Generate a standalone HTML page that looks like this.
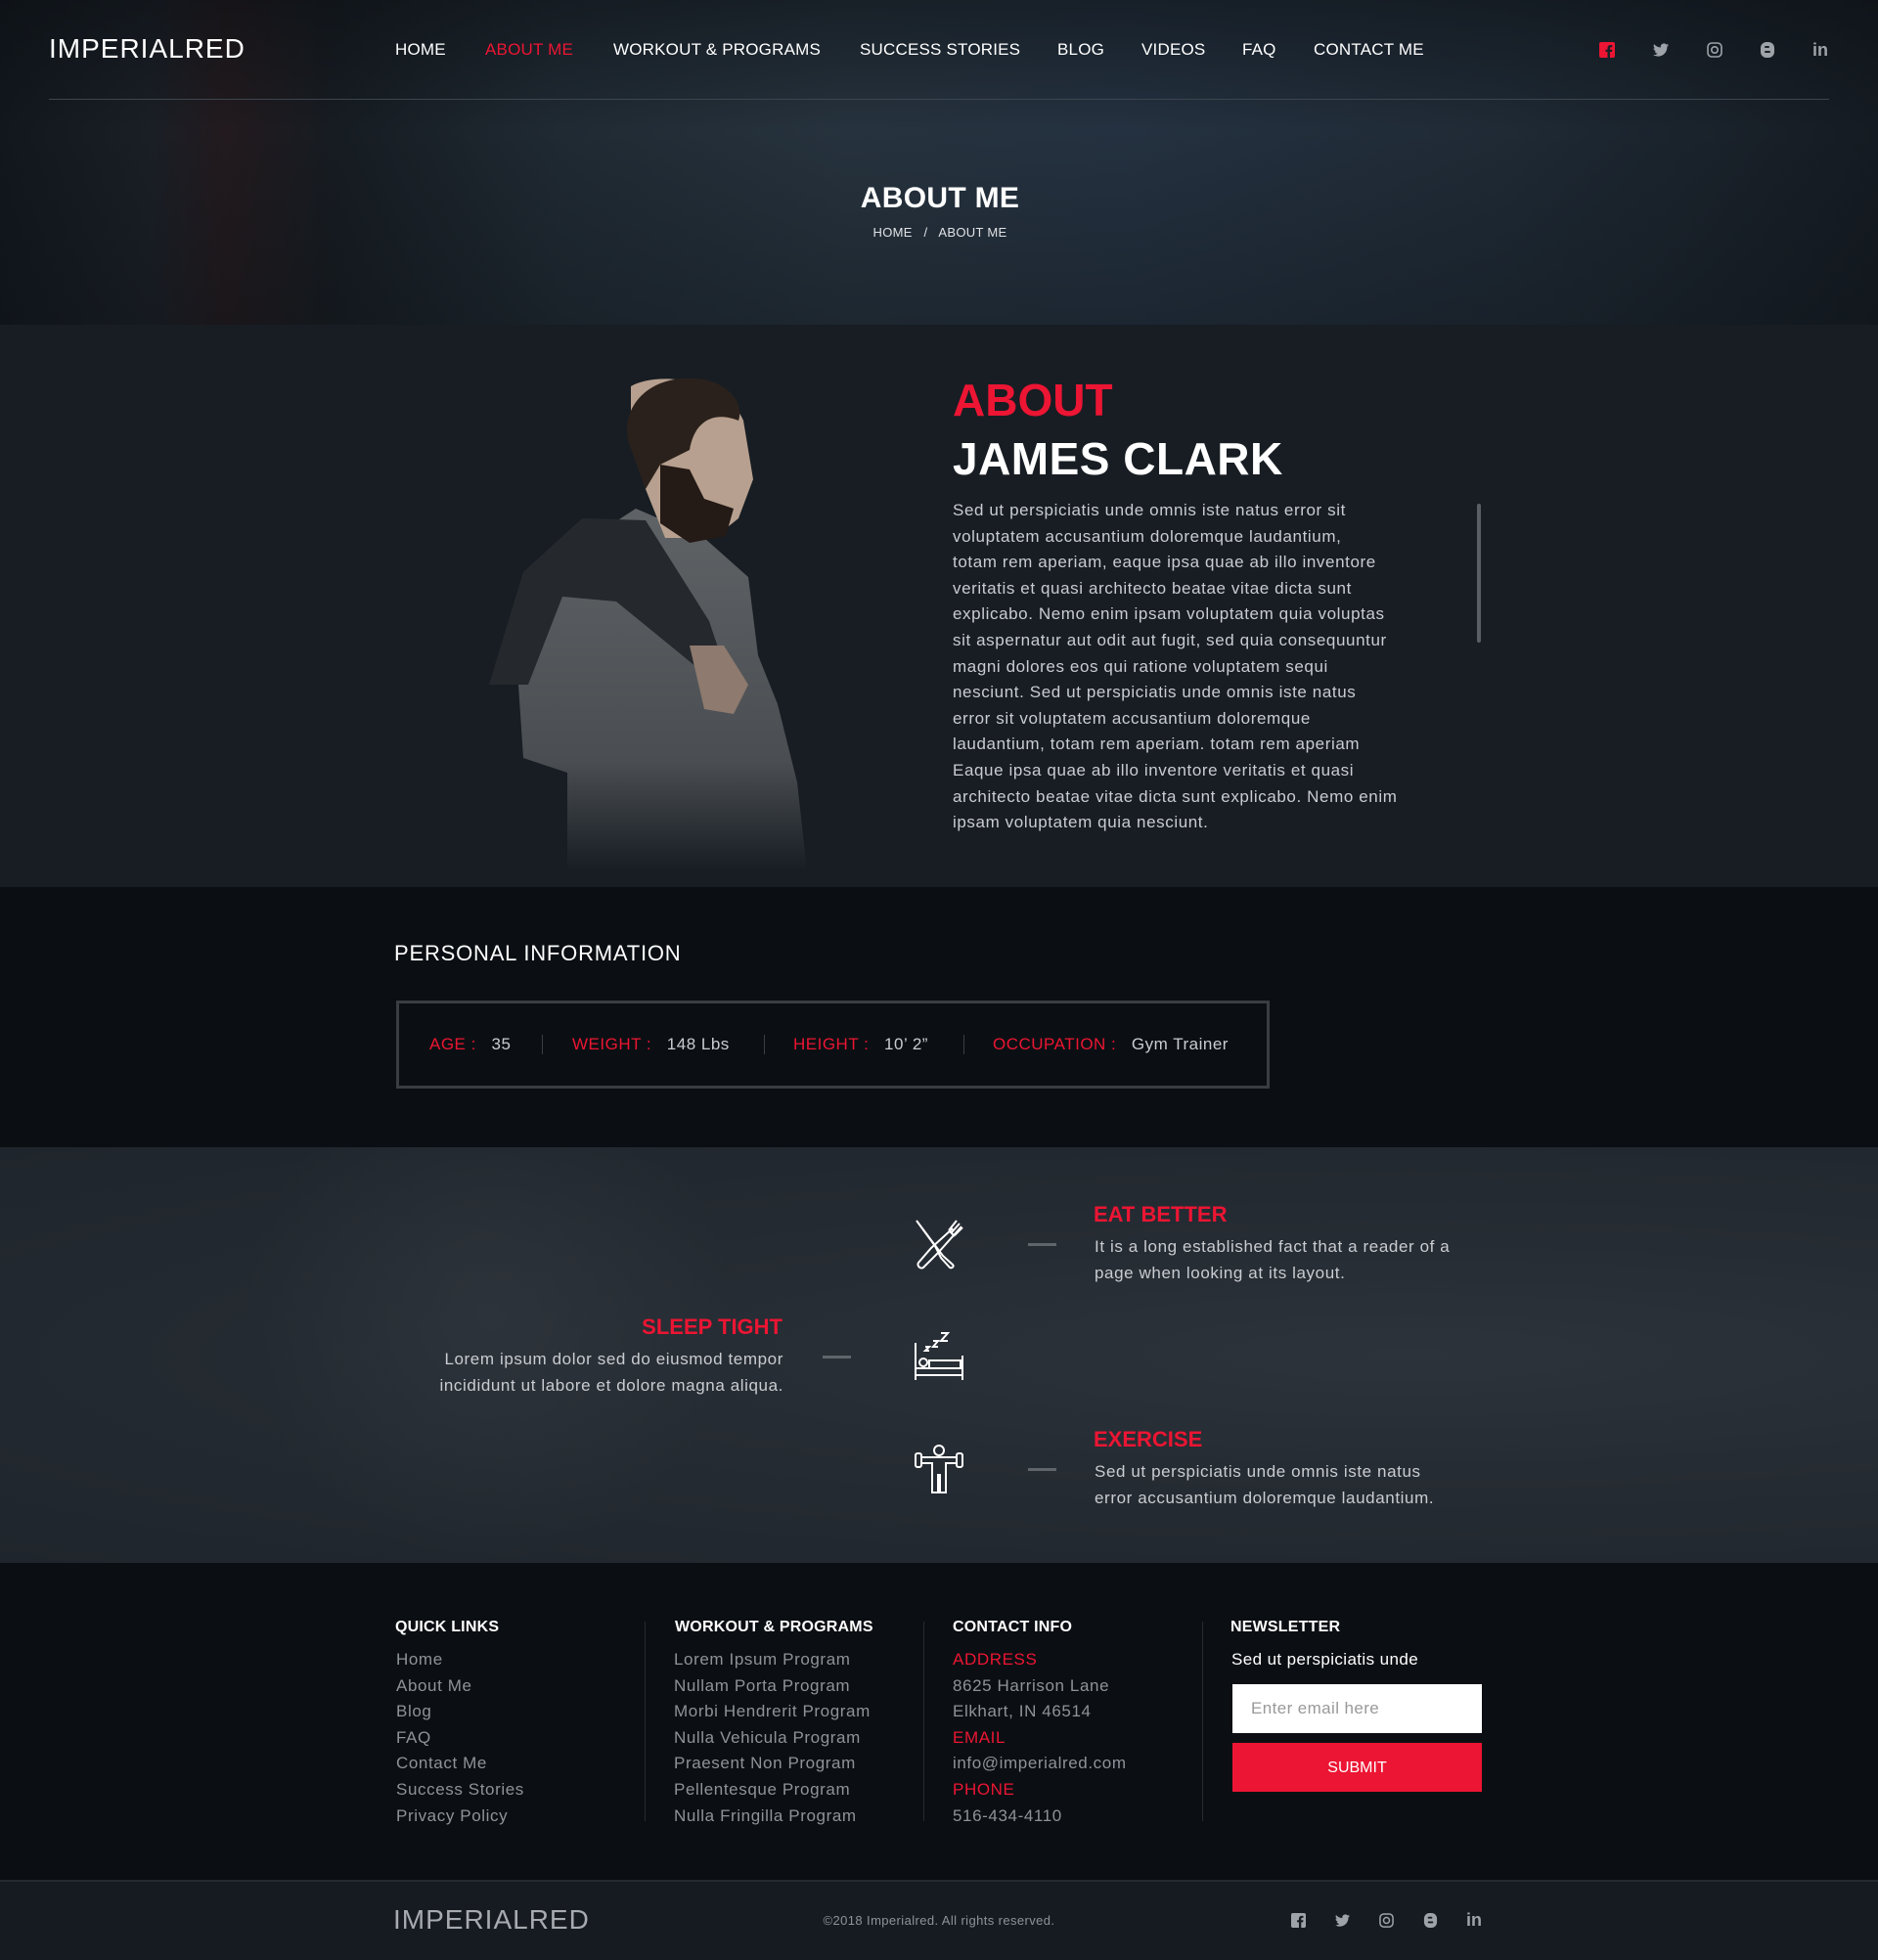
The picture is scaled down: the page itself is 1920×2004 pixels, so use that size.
<!DOCTYPE html>
<html><head><meta charset="utf-8"><style>
*{margin:0;padding:0;box-sizing:border-box}
body{width:1920px;height:2004px;background:#0b0f13;font-family:"Liberation Sans",Arial,sans-serif;position:relative;overflow:hidden;color:#fff}
.a{position:absolute;white-space:nowrap}
.nav{font-size:17px;top:41px;color:#fff;letter-spacing:.2px}
.red{color:#ec1533}
.p{font-size:17px;line-height:26.6px;color:#c9ccd1;letter-spacing:.6px}
.fh{font-size:16px;font-weight:bold;top:1655px;letter-spacing:.2px}
.fl{font-size:17px;line-height:26.6px;color:#8e9399;top:1684px;letter-spacing:.6px}
.ic{position:absolute;width:16px;height:16px}
.pi{font-size:17px;color:#c9ccd1;letter-spacing:.5px;top:1058px}
</style></head><body>
<!-- header -->
<div class="a" style="left:0;top:0;width:1920px;height:332px;background:linear-gradient(90deg,#11171d 0%,#1a1f26 8%,#221a1e 12%,#161c22 18%,#202a33 30%,#26323d 45%,#243140 60%,#1f2a35 80%,#151b22 100%)"></div>
<div class="a" style="left:0;top:0;width:1920px;height:332px;background:linear-gradient(180deg,rgba(10,14,18,.5),rgba(10,14,18,0) 40%,rgba(10,14,18,.3))"></div>
<div class="a" style="left:50px;top:34px;font-size:28px;letter-spacing:1px">IMPERIALRED</div>
<div class="a nav" style="left:404px">HOME</div>
<div class="a nav red" style="left:496px">ABOUT ME</div>
<div class="a nav" style="left:627px">WORKOUT &amp; PROGRAMS</div>
<div class="a nav" style="left:879px">SUCCESS STORIES</div>
<div class="a nav" style="left:1081px">BLOG</div>
<div class="a nav" style="left:1167px">VIDEOS</div>
<div class="a nav" style="left:1270px">FAQ</div>
<div class="a nav" style="left:1343px">CONTACT ME</div>
<svg class="ic" style="left:1635px;top:43px" viewBox="0 0 16 16"><rect width="16" height="16" rx="2" fill="#ec1533"/><path d="M11 16V10h2l.3-2.3H11V6.3c0-.7.2-1.1 1.1-1.1h1.2V3.1c-.2 0-1-.1-1.8-.1-1.8 0-3 1.1-3 3.100V7.7H6.5V10h2v6z" fill="#1a2028"/></svg>
<svg class="ic" style="left:1690px;top:43px" viewBox="0 0 16 16"><path d="M16 3a6.6 6.6 0 01-1.9.5A3.300 3.300 0 0015.600 1.700a6.600 6.600 0 01-2.100.8A3.300 3.300 0 007.900 5.500 9.300 9.300 0 011.100 2.100a3.300 3.300 0 001 4.400 3.300 3.300 0 01-1.500-.4 3.300 3.300 0 002.600 3.200 3.300 3.300 0 01-1.500.1 3.300 3.300 0 003.100 2.300A6.600 6.600 0 010 13.100 9.300 9.300 0 005 14.600c6 0 9.400-5 9.400-9.400v-.4A6.700 6.700 0 0016 3z" fill="#9ea3a9"/></svg>
<svg class="ic" style="left:1745px;top:43px" viewBox="0 0 16 16"><rect x="1" y="1" width="14" height="14" rx="4" fill="none" stroke="#9ea3a9" stroke-width="1.6"/><circle cx="8" cy="8" r="3.200" fill="none" stroke="#9ea3a9" stroke-width="1.600"/></svg>
<svg class="ic" style="left:1799px;top:43px" viewBox="0 0 16 16"><rect x="1" y="0" width="14" height="16" rx="6" fill="#9ea3a9"/><rect x="5" y="4" width="5" height="2" rx="1" fill="#1a2028"/><rect x="5" y="9" width="6" height="2" rx="1" fill="#1a2028"/></svg>
<div class="a" style="left:1853px;top:41px;font-size:18px;font-weight:bold;color:#9ea3a9">in</div>
<div class="a" style="left:50px;top:101px;width:1820px;height:1px;background:#3d454e"></div>
<div class="a" style="left:0;top:186px;width:1922px;text-align:center;font-size:30px;font-weight:bold;letter-spacing:.3px">ABOUT ME</div>
<div class="a" style="left:0;top:230px;width:1922px;text-align:center;font-size:13px;color:#e0e2e5;letter-spacing:.3px">HOME &nbsp; / &nbsp; ABOUT ME</div>

<!-- about -->
<div class="a" style="left:0;top:332px;width:1920px;height:575px;background:#171d23"></div>
<svg class="a" style="left:480px;top:370px" width="380" height="530" viewBox="0 0 380 530">
<defs><linearGradient id="sh" x1="0" y1="0" x2="0" y2="1"><stop offset="0" stop-color="#5f6366"/><stop offset=".7" stop-color="#4a4e52"/><stop offset="1" stop-color="#171d23"/></linearGradient></defs>
<path d="M170,150 L240,180 L285,220 L295,300 L315,350 L335,430 L345,520 L100,520 L100,420 L55,405 L48,300 L70,215 Z" fill="url(#sh)"/>
<path d="M20,330 L55,215 L115,160 L180,162 L245,265 L255,295 L232,312 L150,245 L95,240 L60,330 Z" fill="#25292e"/>
<path d="M165,25 C190,10 260,15 280,60 L290,120 L275,160 L250,180 L200,180 L180,130 L165,80 Z" fill="#b7a08f"/>
<path d="M162,80 C155,40 190,10 240,18 C270,25 280,45 275,60 C250,50 230,60 225,90 L195,105 L180,130 Z" fill="#2b211c"/>
<path d="M195,105 L225,110 L240,140 L270,150 L262,178 L225,185 L195,165 Z" fill="#241a16"/>
<path d="M225,290 L260,290 L285,330 L270,360 L240,355 Z" fill="#8e7a6e"/>
</svg>
<div class="a red" style="left:974px;top:382px;font-size:46px;font-weight:bold">ABOUT</div>
<div class="a" style="left:974px;top:442px;font-size:46px;font-weight:bold;letter-spacing:.5px">JAMES CLARK</div>
<div class="a p" style="left:974px;top:509px">Sed ut perspiciatis unde omnis iste natus error sit<br>voluptatem accusantium doloremque laudantium,<br>totam rem aperiam, eaque ipsa quae ab illo inventore<br>veritatis et quasi architecto beatae vitae dicta sunt<br>explicabo. Nemo enim ipsam voluptatem quia voluptas<br>sit aspernatur aut odit aut fugit, sed quia consequuntur<br>magni dolores eos qui ratione voluptatem sequi<br>nesciunt. Sed ut perspiciatis unde omnis iste natus<br>error sit voluptatem accusantium doloremque<br>laudantium, totam rem aperiam. totam rem aperiam<br>Eaque ipsa quae ab illo inventore veritatis et quasi<br>architecto beatae vitae dicta sunt explicabo. Nemo enim<br>ipsam voluptatem quia nesciunt.</div>
<div class="a" style="left:1510px;top:515px;width:4px;height:142px;border-radius:2px;background:#5a5f65"></div>

<!-- personal info -->
<div class="a" style="left:403px;top:962px;font-size:22px;letter-spacing:.8px">PERSONAL INFORMATION</div>
<div class="a" style="left:405px;top:1023px;width:893px;height:90px;border:3px solid #3a3d42"></div>
<div class="a pi" style="left:439px"><span class="red">AGE :</span>&nbsp;&nbsp; 35</div>
<div class="a" style="left:554px;top:1058px;width:1px;height:20px;background:#3a3f46"></div>
<div class="a pi" style="left:585px"><span class="red">WEIGHT :</span>&nbsp;&nbsp; 148 Lbs</div>
<div class="a" style="left:781px;top:1058px;width:1px;height:20px;background:#3a3f46"></div>
<div class="a pi" style="left:811px"><span class="red">HEIGHT :</span>&nbsp;&nbsp; 10’ 2”</div>
<div class="a" style="left:985px;top:1058px;width:1px;height:20px;background:#3a3f46"></div>
<div class="a pi" style="left:1015px"><span class="red">OCCUPATION :</span>&nbsp;&nbsp; Gym Trainer</div>

<!-- features -->
<div class="a" style="left:0;top:1173px;width:1920px;height:425px;background:radial-gradient(ellipse at 75% 50%,#2c333b 0%,#262c33 40%,#1f252c 100%)"></div>
<div class="a" style="left:250px;top:1173px;width:500px;height:425px;background:radial-gradient(ellipse at 50% 40%,rgba(60,66,74,.35),rgba(0,0,0,0) 70%)"></div>
<svg class="a" style="left:934px;top:1246px" width="52" height="52" viewBox="0 0 52 52" fill="none" stroke="#fff" stroke-width="2"><path d="M3,2 L30,38 L40,47 C42,49 39,51 37,50 L28,40 L22,28 Z"/><path d="M49,8 L25,35 L10,50 C7,52 3,48 5,45 L18,30 L40,10 M44,2 L36,12 M47,5 L39,14 M50,9 L42,17 M36,12 L42,18"/></svg>
<svg class="a" style="left:934px;top:1361px" width="52" height="52" viewBox="0 0 52 52" fill="none" stroke="#fff" stroke-width="2"><path d="M2,12 V50 M50,25 V50 M2,45 H50 M2,38 H50 M16,30 H48 V38 H16 Z"/><circle cx="10" cy="32" r="4"/><path d="M12,16 H16 L12,20 H16 M20,10 H25 L20,16 H25 M28,2 H35 L28,10 H35"/></svg>
<svg class="a" style="left:934px;top:1476px" width="52" height="52" viewBox="0 0 52 52" fill="none" stroke="#fff" stroke-width="2"><circle cx="26" cy="7" r="5"/><path d="M8,14 H44 M8,20 H19 V50 H25 V32 H27 V50 H33 V20 H44 M8,14 V20 M44,14 V20"/><rect x="2" y="10" width="6" height="14" rx="2"/><rect x="44" y="10" width="6" height="14" rx="2"/></svg>
<div class="a" style="left:1051px;top:1271px;width:29px;height:3px;background:#5f656b"></div>
<div class="a" style="left:841px;top:1386px;width:29px;height:3px;background:#5f656b"></div>
<div class="a" style="left:1051px;top:1501px;width:29px;height:3px;background:#5f656b"></div>
<div class="a red" style="left:1118px;top:1229px;font-size:22px;font-weight:bold">EAT BETTER</div>
<div class="a p" style="left:1119px;top:1262px">It is a long established fact that a reader of a<br>page when looking at its layout.</div>
<div class="a red" style="left:500px;top:1344px;width:300px;text-align:right;font-size:22px;font-weight:bold">SLEEP TIGHT</div>
<div class="a p" style="left:380px;top:1377px;width:421px;text-align:right">Lorem ipsum dolor sed do eiusmod tempor<br>incididunt ut labore et dolore magna aliqua.</div>
<div class="a red" style="left:1118px;top:1459px;font-size:22px;font-weight:bold">EXERCISE</div>
<div class="a p" style="left:1119px;top:1492px">Sed ut perspiciatis unde omnis iste natus<br>error accusantium doloremque laudantium.</div>

<!-- footer -->
<div class="a fh" style="left:404px">QUICK LINKS</div>
<div class="a fh" style="left:690px">WORKOUT &amp; PROGRAMS</div>
<div class="a fh" style="left:974px">CONTACT INFO</div>
<div class="a fh" style="left:1258px">NEWSLETTER</div>
<div class="a" style="left:659px;top:1658px;width:1px;height:204px;background:#262b31"></div>
<div class="a" style="left:944px;top:1658px;width:1px;height:204px;background:#262b31"></div>
<div class="a" style="left:1229px;top:1658px;width:1px;height:204px;background:#262b31"></div>
<div class="a fl" style="left:405px">Home<br>About Me<br>Blog<br>FAQ<br>Contact Me<br>Success Stories<br>Privacy Policy</div>
<div class="a fl" style="left:689px">Lorem Ipsum Program<br>Nullam Porta Program<br>Morbi Hendrerit Program<br>Nulla Vehicula Program<br>Praesent Non Program<br>Pellentesque Program<br>Nulla Fringilla Program</div>
<div class="a fl" style="left:974px"><span class="red">ADDRESS</span><br>8625 Harrison Lane<br>Elkhart, IN 46514<br><span class="red">EMAIL</span><br>info@imperialred.com<br><span class="red">PHONE</span><br>516-434-4110</div>
<div class="a" style="left:1259px;top:1684px;font-size:17px;line-height:26.6px;color:#fff;letter-spacing:.4px">Sed ut perspiciatis unde</div>
<div class="a" style="left:1260px;top:1722px;width:255px;height:50px;background:#fff;color:#999;font-size:17px;padding:15px 19px;letter-spacing:.4px">Enter email here</div>
<div class="a" style="left:1260px;top:1782px;width:255px;height:50px;background:#ec1533;color:#fff;font-size:16px;text-align:center;line-height:52px">SUBMIT</div>

<div class="a" style="left:0;top:1922px;width:1920px;height:82px;background:#161b21;border-top:2px solid #252a30"></div>
<div class="a" style="left:402px;top:1947px;font-size:28px;color:#a7abb0;letter-spacing:1px">IMPERIALRED</div>
<div class="a" style="left:0;top:1956px;width:1920px;text-align:center;font-size:13px;color:#8e9399;letter-spacing:.4px">©2018 Imperialred. All rights reserved.</div>
<svg class="ic" style="left:1320px;top:1956px;width:15px;height:15px" viewBox="0 0 16 16"><rect width="16" height="16" rx="2" fill="#9ea3a9"/><path d="M11 16V10h2l.3-2.3H11V6.3c0-.7.2-1.1 1.1-1.1h1.2V3.1c-.2 0-1-.1-1.8-.1-1.8 0-3 1.1-3 3.100V7.700H6.500V10h2v6z" fill="#161b21"/></svg>
<svg class="ic" style="left:1365px;top:1956px;width:15px;height:15px" viewBox="0 0 16 16"><path d="M16 3a6.6 6.6 0 01-1.9.5A3.300 3.300 0 0015.600 1.700a6.600 6.600 0 01-2.100.8A3.300 3.300 0 007.900 5.500 9.300 9.300 0 011.100 2.100a3.300 3.300 0 001 4.400 3.300 3.300 0 01-1.500-.4 3.300 3.300 0 002.600 3.200 3.300 3.300 0 01-1.500.1 3.300 3.300 0 003.100 2.300A6.600 6.600 0 010 13.100 9.300 9.300 0 005 14.600c6 0 9.400-5 9.400-9.400v-.4A6.700 6.700 0 0016 3z" fill="#9ea3a9"/></svg>
<svg class="ic" style="left:1410px;top:1956px;width:15px;height:15px" viewBox="0 0 16 16"><rect x="1" y="1" width="14" height="14" rx="4" fill="none" stroke="#9ea3a9" stroke-width="1.6"/><circle cx="8" cy="8" r="3.200" fill="none" stroke="#9ea3a9" stroke-width="1.600"/></svg>
<svg class="ic" style="left:1455px;top:1956px;width:15px;height:15px" viewBox="0 0 16 16"><rect x="1" y="0" width="14" height="16" rx="6" fill="#9ea3a9"/><rect x="5" y="4" width="5" height="2" rx="1" fill="#161b21"/><rect x="5" y="9" width="6" height="2" rx="1" fill="#161b21"/></svg>
<div class="a" style="left:1499px;top:1953px;font-size:18px;font-weight:bold;color:#9ea3a9">in</div>
</body></html>
